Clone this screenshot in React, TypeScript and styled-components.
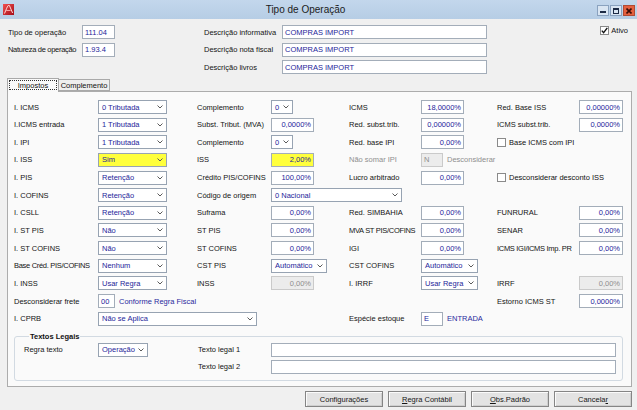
import React from 'react'
import styled, { createGlobalStyle } from 'styled-components'

const GlobalStyle = createGlobalStyle`
  html, body { margin: 0; padding: 0; }
  body {
    background: #f0f0f0;
    font-family: "Liberation Sans", Arial, sans-serif;
    font-size: 7.5px;
    color: #111;
  }
`

type Tone = 'yellow' | 'disabled' | undefined

const Window = styled.div`
  width: 637px;
  height: 410px;
  display: flex;
  flex-direction: column;
  background: #f0f0f0;
  overflow: hidden;
`

const TitleBar = styled.div`
  height: 19px;
  flex-shrink: 0;
  display: flex;
  align-items: center;
  padding: 0 2px 0 3px;
  background: linear-gradient(#c3d7ec, #b6cde5);
`

const Title = styled.div`
  flex: 1;
  text-align: center;
  font-size: 10px;
  color: #1b1b1b;
`

const WinButtons = styled.div`
  display: flex;
  gap: 1px;
  margin-top: 2px;
`

const WinButton = styled.div<{ $close?: boolean }>`
  box-sizing: border-box;
  width: 12px;
  height: 11px;
  display: flex;
  align-items: center;
  justify-content: center;
  border: 1px solid ${p => (p.$close ? '#b04a34' : '#8aa2bf')};
  background: ${p => (p.$close ? '#e4603f' : '#d9e5f2')};
`

const Header = styled.div`
  height: 59px;
  box-sizing: border-box;
  display: flex;
  align-items: flex-start;
  padding: 6px 9px 0 8px;
`

const FieldGrid = styled.div<{ $label: number; $input: number; $gap?: number }>`
  display: grid;
  grid-template-columns: ${p => p.$label}px ${p => p.$input}px;
  grid-auto-rows: 14px;
  row-gap: 3.5px;
  align-items: center;
  margin-left: ${p => p.$gap ?? 0}px;
`

const Ativo = styled.label`
  margin-left: auto;
  margin-top: 1px;
  display: flex;
  align-items: center;
  gap: 2px;
`

const TabStrip = styled.div`
  height: 13px;
  flex-shrink: 0;
  display: flex;
  align-items: flex-end;
  padding-left: 7px;
  position: relative;
  z-index: 1;
`

const Tab = styled.div<{ $active?: boolean; $w: number }>`
  box-sizing: border-box;
  width: ${p => p.$w}px;
  height: ${p => (p.$active ? 14 : 12)}px;
  margin-bottom: ${p => (p.$active ? -1 : 0)}px;
  border: 1px solid #a9a9a9;
  border-bottom: ${p => (p.$active ? 'none' : '1px solid #a9a9a9')};
  border-left: ${p => (p.$active ? '1px solid #a9a9a9' : 'none')};
  background: ${p => (p.$active ? '#fafafa' : '#eeeeee')};
  display: flex;
  align-items: stretch;
  padding: ${p => (p.$active ? '1px 1px 2px' : '0')};
`

const TabLabel = styled.span<{ $focus?: boolean }>`
  flex: 1;
  display: flex;
  align-items: center;
  justify-content: center;
  border: 1px dotted ${p => (p.$focus ? '#333' : 'transparent')};
`

const Panel = styled.div`
  height: 296px;
  box-sizing: border-box;
  margin: 0 5px 0 7px;
  border: 1px solid #acacac;
  background: #fafafa;
  padding: 8px 8px 0 6px;
  display: flex;
  flex-direction: column;
`

const FormGrid = styled.div`
  display: grid;
  grid-template-columns: 84px 99px 74px 78px 72px 76px 82px 1fr;
  grid-template-rows: repeat(13, 14px);
  row-gap: 3.65px;
  align-items: center;
`

const Label = styled.span<{ $muted?: boolean; $tight?: boolean }>`
  white-space: nowrap;
  color: ${p => (p.$muted ? '#8f8f8f' : '#141414')};
  letter-spacing: ${p => (p.$tight ? '-0.3px' : '0')};
`

const Wide = styled.div<{ $span: number }>`
  grid-column: span ${p => p.$span};
  display: flex;
  align-items: center;
  gap: 3px;
`

const Note = styled.span<{ $muted?: boolean }>`
  white-space: nowrap;
  color: ${p => (p.$muted ? '#8f8f8f' : '#2a2a9e')};
  margin-left: 1px;
`

const TextBox = styled.div<{ $w: number; $tone?: Tone; $right?: boolean }>`
  box-sizing: border-box;
  width: ${p => p.$w}px;
  height: 14px;
  display: flex;
  align-items: center;
  justify-content: ${p => (p.$right ? 'flex-end' : 'flex-start')};
  padding: 0 2px;
  white-space: nowrap;
  overflow: hidden;
  border: 1px solid ${p => (p.$tone === 'disabled' ? '#cacaca' : '#a3adb9')};
  background: ${p =>
    p.$tone === 'yellow' ? '#ffff3c' : p.$tone === 'disabled' ? '#ececec' : '#ffffff'};
  color: ${p => (p.$tone === 'disabled' ? '#8c8c8c' : '#25259a')};
`

const SelectBox = styled.div<{ $w: number; $tone?: Tone }>`
  box-sizing: border-box;
  width: ${p => p.$w}px;
  height: 14px;
  display: flex;
  align-items: center;
  justify-content: space-between;
  padding: 0 3px 0 3px;
  white-space: nowrap;
  border: 1px solid #97a3b2;
  background: ${p => (p.$tone === 'yellow' ? '#ffff3c' : '#ffffff')};
  color: #25259a;
`

const Check = styled.span`
  box-sizing: border-box;
  width: 9px;
  height: 9px;
  border: 1px solid #8a8a8a;
  background: #fff;
  display: inline-flex;
  align-items: center;
  justify-content: center;
`

const CheckField = styled.label`
  grid-column: span 2;
  display: flex;
  align-items: center;
  gap: 3px;
  white-space: nowrap;
`

const Group = styled.fieldset`
  margin: 6px 0 0 0;
  padding: 1px 6px 6px 9px;
  border: 1px solid #d2dae2;
  border-radius: 3px;
  min-width: 0;
  display: grid;
  grid-template-columns: 74px 100px 73px 1fr;
  grid-template-rows: 14px 14px;
  row-gap: 3px;
  align-items: center;
`

const Legend = styled.legend`
  font-weight: bold;
  line-height: 10px;
  padding: 0 1px;
  margin-left: 5px;
`

const ButtonBar = styled.div`
  display: flex;
  justify-content: flex-end;
  gap: 5px;
  padding: 4px 5px 0 0;
`

const Button = styled.button`
  box-sizing: border-box;
  width: 78px;
  height: 16px;
  padding: 0;
  font: inherit;
  color: #161616;
  border: 1px solid #858585;
  background: #e3e3e3;
  box-shadow: inset 1px 1px 0 #fbfbfb, inset -1px -1px 0 #cfcfcf;
`

const Chevron = () => (
  <svg width="6" height="4" viewBox="0 0 6 4">
    <polyline points="0.5,0.5 3,3 5.5,0.5" fill="none" stroke="#5a5a5a" strokeWidth="1" />
  </svg>
)

const Select = ({ w, value, tone }: { w: number; value: string; tone?: Tone }) => (
  <SelectBox $w={w} $tone={tone}>
    <span>{value}</span>
    <Chevron />
  </SelectBox>
)

const Num = ({ w = 43, value, tone }: { w?: number; value: string; tone?: Tone }) => (
  <TextBox $w={w} $tone={tone} $right>
    {value}
  </TextBox>
)

const Empty = () => <span />

const CheckMark = () => (
  <svg width="7" height="7" viewBox="0 0 7 7">
    <polyline points="0.8,3.6 2.6,5.6 6.3,0.9" fill="none" stroke="#111" strokeWidth="1.4" />
  </svg>
)

const AppIcon = () => (
  <svg width="11" height="11" viewBox="0 0 11 11">
    <defs>
      <linearGradient id="appIcon" x1="0" y1="0" x2="1" y2="1">
        <stop offset="0" stopColor="#f25050" />
        <stop offset="1" stopColor="#a40d18" />
      </linearGradient>
    </defs>
    <rect width="11" height="11" fill="url(#appIcon)" />
    <path d="M1.5 9.5 C3 6 4 3 5.2 1.5 L6.4 1.5 C7.5 4 8.5 6.5 9.6 9" fill="none" stroke="#ffd6d6" strokeWidth="1" />
    <path d="M3.2 6.5 L7.6 6.5" stroke="#ffb0b0" strokeWidth="0.9" />
  </svg>
)

export default function App() {
  return (
    <>
      <GlobalStyle />
      <Window>
        <TitleBar>
          <AppIcon />
          <Title>Tipo de Operação</Title>
          <WinButtons>
            <WinButton>
              <svg width="6" height="6" viewBox="0 0 6 6">
                <rect x="0" y="3" width="6" height="2" fill="#1d2b45" />
              </svg>
            </WinButton>
            <WinButton>
              <svg width="6" height="6" viewBox="0 0 6 6">
                <rect x="0.5" y="0.5" width="5" height="5" fill="none" stroke="#1d2b45" />
                <rect x="0" y="0" width="6" height="2" fill="#1d2b45" />
              </svg>
            </WinButton>
            <WinButton $close>
              <svg width="6" height="6" viewBox="0 0 6 6">
                <path d="M0.5 0.5 L5.5 5.5 M5.5 0.5 L0.5 5.5" stroke="#3a0c06" strokeWidth="1.6" />
              </svg>
            </WinButton>
          </WinButtons>
        </TitleBar>

        <Header>
          <FieldGrid $label={74} $input={33}>
            <Label>Tipo de operação</Label>
            <TextBox $w={33}>111.04</TextBox>
            <Label $tight>Natureza de operação</Label>
            <TextBox $w={33}>1.93.4</TextBox>
          </FieldGrid>
          <FieldGrid $label={78} $input={205} $gap={89}>
            <Label>Descrição informativa</Label>
            <TextBox $w={205}>COMPRAS IMPORT</TextBox>
            <Label>Descrição nota fiscal</Label>
            <TextBox $w={205}>COMPRAS IMPORT</TextBox>
            <Label>Descrição livros</Label>
            <TextBox $w={205}>COMPRAS IMPORT</TextBox>
          </FieldGrid>
          <Ativo>
            <Check>
              <CheckMark />
            </Check>
            Ativo
          </Ativo>
        </Header>

        <TabStrip>
          <Tab $active $w={52}>
            <TabLabel $focus>Impostos</TabLabel>
          </Tab>
          <Tab $w={51}>
            <TabLabel>Complemento</TabLabel>
          </Tab>
        </TabStrip>

        <Panel>
          <FormGrid>
            <Label>I. ICMS</Label>
            <Select w={69} value="0 Tributada" />
            <Label>Complemento</Label>
            <Select w={22} value="0" />
            <Label>ICMS</Label>
            <Num value="18,0000%" />
            <Label>Red. Base ISS</Label>
            <Num w={44} value="0,00000%" />

            <Label>I.ICMS entrada</Label>
            <Select w={69} value="1 Tributada" />
            <Label>Subst. Tribut. (MVA)</Label>
            <Num value="0,0000%" />
            <Label>Red. subst.trib.</Label>
            <Num value="0,00000%" />
            <Label>ICMS subst.trib.</Label>
            <Num w={44} value="0,0000%" />

            <Label>I. IPI</Label>
            <Select w={69} value="1 Tributada" />
            <Label>Complemento</Label>
            <Select w={22} value="0" />
            <Label>Red. base IPI</Label>
            <Num value="0,00%" />
            <CheckField>
              <Check />
              Base ICMS com IPI
            </CheckField>

            <Label>I. ISS</Label>
            <Select w={69} value="Sim" tone="yellow" />
            <Label>ISS</Label>
            <Num value="2,00%" tone="yellow" />
            <Label $muted>Não somar IPI</Label>
            <Wide $span={1}>
              <TextBox $w={22} $tone="disabled">N</TextBox>
              <Note $muted>Desconsiderar</Note>
            </Wide>
            <Empty />
            <Empty />

            <Label>I. PIS</Label>
            <Select w={69} value="Retenção" />
            <Label>Crédito PIS/COFINS</Label>
            <Num value="100,00%" />
            <Label>Lucro arbitrado</Label>
            <Num value="0,00%" />
            <CheckField>
              <Check />
              Desconsiderar desconto ISS
            </CheckField>

            <Label>I. COFINS</Label>
            <Select w={69} value="Retenção" />
            <Label>Código de origem</Label>
            <Wide $span={2}>
              <Select w={131} value="0 Nacional" />
            </Wide>
            <Empty />
            <Empty />
            <Empty />

            <Label>I. CSLL</Label>
            <Select w={69} value="Retenção" />
            <Label>Suframa</Label>
            <Num value="0,00%" />
            <Label>Red. SIMBAHIA</Label>
            <Num value="0,00%" />
            <Label>FUNRURAL</Label>
            <Num w={44} value="0,00%" />

            <Label>I. ST PIS</Label>
            <Select w={69} value="Não" />
            <Label>ST PIS</Label>
            <Num value="0,00%" />
            <Label $tight>MVA ST PIS/COFINS</Label>
            <Num value="0,00%" />
            <Label>SENAR</Label>
            <Num w={44} value="0,00%" />

            <Label>I. ST COFINS</Label>
            <Select w={69} value="Não" />
            <Label>ST COFINS</Label>
            <Num value="0,00%" />
            <Label>IGI</Label>
            <Num value="0,00%" />
            <Label $tight>ICMS IGI/ICMS Imp. PR</Label>
            <Num w={44} value="0,00%" />

            <Label $tight>Base Créd. PIS/COFINS</Label>
            <Select w={69} value="Nenhum" />
            <Label>CST PIS</Label>
            <Select w={56} value="Automático" />
            <Label>CST COFINS</Label>
            <Select w={57} value="Automático" />
            <Empty />
            <Empty />

            <Label>I. INSS</Label>
            <Select w={69} value="Usar Regra" />
            <Label>INSS</Label>
            <Num value="0,00%" tone="disabled" />
            <Label>I. IRRF</Label>
            <Select w={57} value="Usar Regra" />
            <Label>IRRF</Label>
            <Num w={44} value="0,00%" tone="disabled" />

            <Label>Desconsiderar frete</Label>
            <Wide $span={2}>
              <TextBox $w={17}>00</TextBox>
              <Note>Conforme Regra Fiscal</Note>
            </Wide>
            <Empty />
            <Empty />
            <Empty />
            <Label>Estorno ICMS ST</Label>
            <Num w={44} value="0,0000%" />

            <Label>I. CPRB</Label>
            <Wide $span={2}>
              <Select w={159} value="Não se Aplica" />
            </Wide>
            <Empty />
            <Label>Espécie estoque</Label>
            <Wide $span={1}>
              <TextBox $w={22}>E</TextBox>
              <Note>ENTRADA</Note>
            </Wide>
            <Empty />
            <Empty />
          </FormGrid>

          <Group>
            <Legend>Textos Legais</Legend>
            <Label>Regra texto</Label>
            <Select w={50} value="Operação" />
            <Label>Texto legal 1</Label>
            <TextBox $w={345} />
            <Empty />
            <Empty />
            <Label>Texto legal 2</Label>
            <TextBox $w={345} />
          </Group>
        </Panel>

        <ButtonBar>
          <Button>Configurações</Button>
          <Button>
            <u>R</u>egra Contábil
          </Button>
          <Button>
            <u>O</u>bs.Padrão
          </Button>
          <Button>
            Cancela<u>r</u>
          </Button>
        </ButtonBar>
      </Window>
    </>
  )
}
